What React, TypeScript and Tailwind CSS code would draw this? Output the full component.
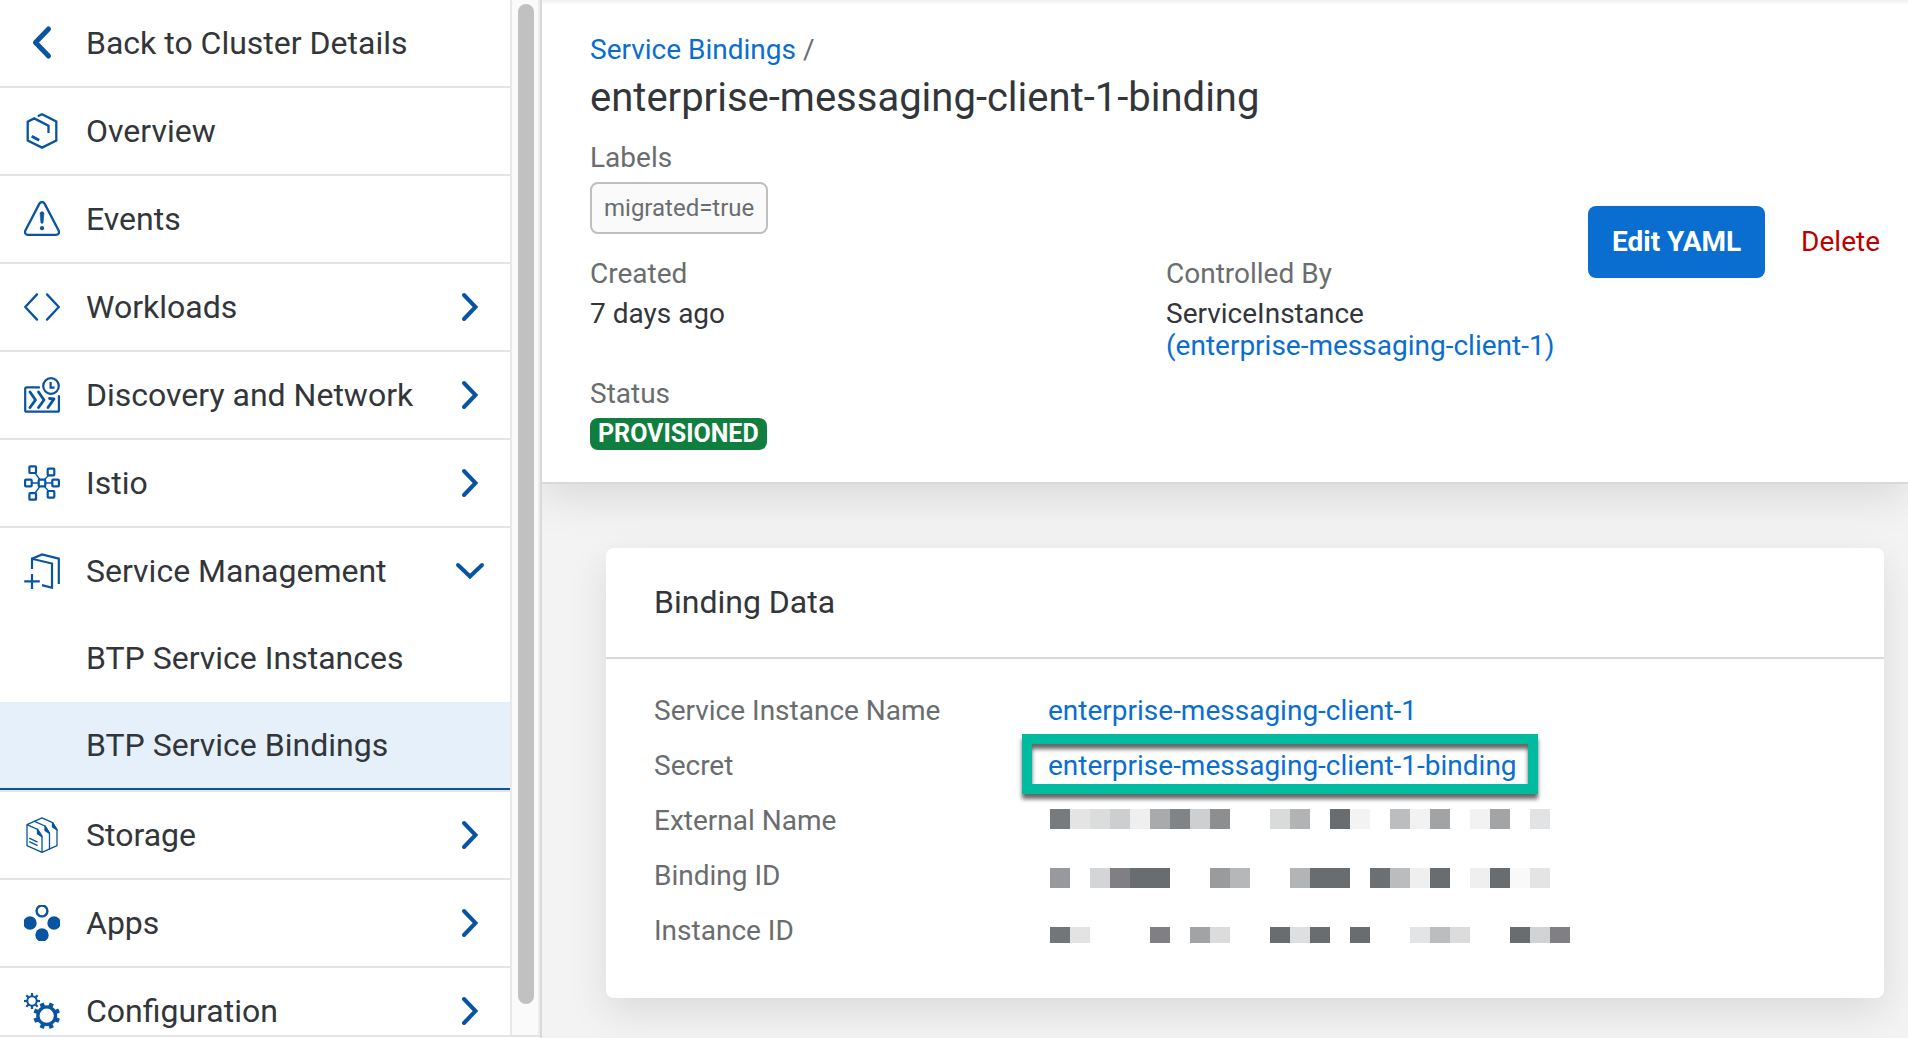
import type { ReactNode } from "react";

function Icon({ children, width = 2.3 }: { children: ReactNode; width?: number }) {
  return (
    <svg
      aria-hidden="true"
      viewBox="0 0 36 36"
      className="size-9 shrink-0"
      fill="none"
      stroke="currentColor"
      strokeWidth={width}
      strokeLinejoin="round"
      strokeLinecap="round"
    >
      {children}
    </svg>
  );
}

const BackIcon = () => (
  <Icon width={5}>
    <path d="M24.5 4 11.5 17.5l13 13.5" />
  </Icon>
);

const OverviewIcon = () => (
  <Icon>
    <g strokeLinecap="butt" strokeLinejoin="miter">
      <path d="M13.8 3.2 18 1.3l14.3 7.2v19L18 34.6 3.7 27.5V8.8l6.5-3.4 14.3 7.3V20" />
      <path strokeWidth="3" d="M7.700 23.200l7.500 4" />
    </g>
  </Icon>
);

const EventsIcon = () => (
  <Icon>
    <path d="M15.400 2.600c1.200-2.100 4-2.100 5.200 0L34.600 29.500c1.100 2.200-.2 4.300-2.600 4.300H4c-2.400 0-3.700-2.100-2.600-4.300Z" />
    <path
      d="M16.100 12.200c0-2 3.800-2 3.800 0l-.8 9.300c-.2 1.300-2 1.300-2.200 0Z"
      fill="currentColor"
      strokeWidth="0.6"
    />
    <circle cx="18" cy="27.200" r="2.100" fill="currentColor" stroke="none" />
  </Icon>
);

const WorkloadsIcon = () => (
  <Icon>
    <path d="M13 5.400 1.200 18 13 30.600M23 5.400 34.800 18 23 30.600" />
  </Icon>
);

const DiscoveryIcon = () => (
  <Icon width={2.2}>
    <path d="M15 10.400H2.500Q1.200 10.400 1.200 11.700V33.200Q1.200 34.700 2.500 34.700H33.500Q34.900 34.700 34.900 33.200V19" />
    <circle cx="27" cy="9" r="7.800" />
    <path d="M26.600 5v5.600h4" strokeLinejoin="miter" strokeLinecap="butt" />
    <path
      d="M6 15l5.500 8L6 30.500M14.500 15l5.500 8-5.500 7.500M25.500 21.500l4.500.5-6 8.500"
      strokeWidth="2.800"
    />
  </Icon>
);

const meshNodes = [
  [8.7, 4.7],
  [27, 7],
  [4.4, 18],
  [18, 18],
  [31.6, 18],
  [8.7, 31.4],
  [27, 29.3],
];

const IstioIcon = () => (
  <Icon width={2.2}>
    <path
      strokeWidth="1.300"
      d="M8 18h6M22 18h6M11 8l4.500 6M24.500 10.500l-4 4M11 28l4.500-6M24.500 26l-4-4.500"
    />
    {meshNodes.map(([x, y]) => (
      <rect key={`${x}-${y}`} x={x - 3.3} y={y - 3.3} width="6.600" height="6.600" rx="0.800" />
    ))}
  </Icon>
);

const ServiceIcon = () => (
  <Icon width={2.2}>
    <g strokeLinecap="butt" strokeLinejoin="miter">
      <path d="M8 16V5.800l20 4.700v24.200l-10-2.600" />
      <path d="M8 5.800l10-4.300 16.800 4.200V31" />
      <path d="M.2 28.300h15.600M8 21v15" />
    </g>
  </Icon>
);

const StorageIcon = () => (
  <Icon width={1.3}>
    <path d="M3 7.600 18 .8l10.500 4.800L33 12.500v16.200L18 35.400 3 28.700V7.600l10.500 4.700L18 19v16.400" />
    <path d="M10.500 4.300 21 9l4.500 7v16" />
    <g fill="currentColor">
      <path d="M13.500 12.300v4.500l4.500 3Z" />
      <path d="M21 9v4.500l4.500 3Z" />
      <path d="M28.500 5.600V10l4.500 3Z" />
    </g>
    <path d="M5.700 21.300l7.500 3.500M5.700 24.800l7.500 3.500" />
  </Icon>
);

const AppsIcon = () => (
  <Icon width={2.4}>
    <circle cx="18" cy="6" r="5.400" />
    <g fill="currentColor" stroke="none">
      <circle cx="6" cy="18" r="6.700" />
      <circle cx="30" cy="18" r="6.700" />
      <circle cx="18" cy="30" r="6.700" />
    </g>
  </Icon>
);

const teeth = [0, 45, 90, 135, 180, 225, 270, 315];

const ConfigurationIcon = () => (
  <Icon>
    <g strokeLinecap="butt">
      <circle cx="8" cy="8" r="4.700" strokeWidth="2" />
      {teeth.map((a) => (
        <path key={a} d="M8 3V0" strokeWidth="2.200" transform={`rotate(${a} 8 8)`} />
      ))}
      <circle cx="22.700" cy="22.700" r="8.800" strokeWidth="3.400" />
      {teeth.map((a) => (
        <path
          key={a}
          d="M22.700 13.700V9.300"
          strokeWidth="4.400"
          transform={`rotate(${a + 22.5} 22.7 22.7)`}
        />
      ))}
    </g>
  </Icon>
);

function Chevron({ open }: { open?: boolean }) {
  return (
    <svg
      aria-hidden="true"
      viewBox="0 0 32 32"
      className="ml-auto size-8 shrink-0"
      fill="none"
      stroke="currentColor"
      strokeWidth="4"
      strokeLinecap="round"
      strokeLinejoin="miter"
    >
      <path d={open ? "M4 10 16 21.500 28 10" : "M10 4 21.500 16 10 28"} />
    </svg>
  );
}

type Entry = { label: string; icon: () => ReactNode; group?: boolean; children?: string[] };

const entries: Entry[] = [
  { label: "Back to Cluster Details", icon: BackIcon },
  { label: "Overview", icon: OverviewIcon },
  { label: "Events", icon: EventsIcon },
  { label: "Workloads", icon: WorkloadsIcon, group: true },
  { label: "Discovery and Network", icon: DiscoveryIcon, group: true },
  { label: "Istio", icon: IstioIcon, group: true },
  {
    label: "Service Management",
    icon: ServiceIcon,
    group: true,
    children: ["BTP Service Instances", "BTP Service Bindings"],
  },
  { label: "Storage", icon: StorageIcon, group: true },
  { label: "Apps", icon: AppsIcon, group: true },
  { label: "Configuration", icon: ConfigurationIcon, group: true },
];

const rowClass = "flex h-[86px] w-full items-center gap-[26px] px-6 text-left text-[#0854a0]";

function NavEntry({ entry }: { entry: Entry }) {
  const Glyph = entry.icon;
  const content = (
    <>
      <Glyph />
      <span className="whitespace-nowrap text-[#32363a]">{entry.label}</span>
    </>
  );
  return (
    <li className="border-b-2 border-[#e4e4e4]">
      {entry.group ? (
        <button type="button" aria-expanded={!!entry.children} className={rowClass}>
          {content}
          <Chevron open={!!entry.children} />
        </button>
      ) : (
        <a href="#" className={rowClass}>
          {content}
        </a>
      )}
      {entry.children && (
        <ul>
          {entry.children.map((child, i) =>
            i === 1 ? (
              <li key={child}>
                <a
                  href="#"
                  aria-current="page"
                  className="flex h-[88px] items-center border-b-2 border-[#0854a0] bg-[#e5f0fa] pl-[86px]"
                >
                  {child}
                </a>
              </li>
            ) : (
              <li key={child}>
                <a href="#" className="flex h-[88px] items-center pl-[86px]">
                  {child}
                </a>
              </li>
            ),
          )}
        </ul>
      )}
    </li>
  );
}

function Sidebar() {
  return (
    <aside className="flex h-full w-[542px] shrink-0 border-r-2 border-[#d9d9d9] bg-white pb-px">
      <div className="flex min-w-0 flex-1 border-b-2 border-[#e4e4e4]">
        <nav className="min-w-0 flex-1 overflow-hidden border-r-2 border-[#e8e8e8] text-[32px] leading-10">
          <ul>
            {entries.map((entry) => (
              <NavEntry key={entry.label} entry={entry} />
            ))}
          </ul>
        </nav>
        <div className="w-7 border-r-2 border-[#ececec] bg-[#fafafa] pt-1 pr-1 pl-1.5">
          <div className="h-[97%] rounded-full bg-[#c1c1c1]" />
        </div>
      </div>
    </aside>
  );
}

function Field({ label, children }: { label: string; children: ReactNode }) {
  return (
    <div>
      <dt className="text-[#6a6d70]">{label}</dt>
      <dd className="mt-2">{children}</dd>
    </div>
  );
}

function PageHeader() {
  return (
    <header className="flex items-center border-b-2 border-[#d9d9d9] bg-[linear-gradient(#f0f0f0,#ffffff_5px)] pt-[34px] pr-2 pb-8 pl-12 text-[28px] leading-8 shadow-[0_14px_40px_rgba(0,0,0,0.1)]">
      <div className="min-w-0 flex-1">
        <nav aria-label="Breadcrumb" className="text-[#6a6d70]">
          <a href="#" className="text-[#0a6ed1]">
            Service Bindings
          </a>{" "}
          /
        </nav>
        <h1 className="mt-2 text-[40px] leading-12">enterprise-messaging-client-1-binding</h1>
        <dl className="mt-5">
          <Field label="Labels">
            <span className="inline-flex h-[52px] items-center rounded-lg border-2 border-[#bfbfbf] bg-[#fafafa] px-3 align-top text-2xl text-[#6a6d70]">
              migrated=true
            </span>
          </Field>
          <div className="mt-6 grid grid-cols-[576fr_422fr]">
            <Field label="Created">7 days ago</Field>
            <Field label="Controlled By">
              <span className="block">ServiceInstance</span>
              <a href="#" className="block whitespace-nowrap text-[#0a6ed1]">
                (enterprise-messaging-client-1)
              </a>
            </Field>
          </div>
          <div className="mt-4">
            <Field label="Status">
              <span className="inline-block rounded-lg bg-[#107e3e] px-2 align-top text-[25px] font-bold text-white">
                PROVISIONED
              </span>
            </Field>
          </div>
        </dl>
      </div>
      <div className="flex gap-4">
        <button
          type="button"
          className="h-[72px] rounded-lg bg-[#0a6ed1] px-6 font-bold whitespace-nowrap text-white"
        >
          Edit YAML
        </button>
        <button type="button" className="h-[72px] px-5 text-[#bb0000]">
          Delete
        </button>
      </div>
    </header>
  );
}

/* Redacted values: one colour per 20px tile, a dash leaves a gap. */
const masks = {
  external:
    "#777b7e #e4e4e4 #dadddc #cdced0 #efefef #a9aaac #808487 #cecfd1 #8d8e90 - - #d9dbdb #b2b3b5 - #6a6d70 #f3f3f3 - #bcbdbf #f2f2f2 #a2a3a5 - #f2f2f2 #a3a4a6 - #e2e3e5",
  binding:
    "#98999d - #d4d5d7 #808084 #6a6d70 #6a6d70 - - #9a9b9c #b6b7b8 - - #b3b4b6 #6a6d70 #6a6d70 - #6c7073 #bbbcbe #efefef #6a6d70 - #efefef #6a6d70 #f9f9f9 #e4e4e4",
  instance:
    "#727679 #e3e3e3 - - - #808084 - #a2a3a5 #dcdcdc - - #6a6d70 #dedfe1 #6a6d70 - #6a6d70 - - #e3e4e6 #bcbdbf #dcdcdc - - #6a6d70 #d2d3d5 #808084",
};

function Mask({ tiles, className }: { tiles: string; className: string }) {
  return (
    <div className="flex pl-0.5">
      {tiles.split(" ").map((color, i) => (
        <span
          key={i}
          className={className}
          style={{ backgroundColor: color === "-" ? "transparent" : color }}
        />
      ))}
    </div>
  );
}

function DataRow({ label, children }: { label: string; children: ReactNode }) {
  return (
    <div className="grid h-[55px] grid-cols-[394px_1fr]">
      <dt className="text-[#6a6d70]">{label}</dt>
      <dd>{children}</dd>
    </div>
  );
}

function BindingData() {
  return (
    <section className="mt-16 mr-6 ml-16 rounded-lg bg-white shadow-[0_14px_40px_rgba(0,0,0,0.1)]">
      <h2 className="border-b-2 border-[#d9d9d9] px-12 py-8 text-[32px] leading-[45px]">
        Binding Data
      </h2>
      <dl className="px-12 pt-6 pb-10 text-[28px] leading-[55px]">
        <DataRow label="Service Instance Name">
          <a href="#" className="text-[#0a6ed1]">
            enterprise-messaging-client-1
          </a>
        </DataRow>
        <DataRow label="Secret">
          <span className="relative inline-block">
            <a href="#" className="text-[#0a6ed1]">
              enterprise-messaging-client-1-binding
            </a>
            <span className="pointer-events-none absolute -top-1 -left-[26px] h-[60px] w-[516px] border-10 border-[#00bb9f] drop-shadow-[0_5px_2px_rgba(0,0,0,0.6)]" />
          </span>
        </DataRow>
        <DataRow label="External Name">
          <Mask tiles={masks.external} className="mt-4 h-5 w-5" />
        </DataRow>
        <DataRow label="Binding ID">
          <Mask tiles={masks.binding} className="mt-5 h-5 w-5" />
        </DataRow>
        <DataRow label="Instance ID">
          <Mask tiles={masks.instance} className="mt-6 h-4 w-5" />
        </DataRow>
      </dl>
    </section>
  );
}

export default function App() {
  return (
    <div className="flex h-screen overflow-hidden bg-[#f3f3f3] font-['Roboto',sans-serif] text-[#32363a]">
      <Sidebar />
      <main className="min-w-0 flex-1 overflow-hidden">
        <PageHeader />
        <BindingData />
      </main>
    </div>
  );
}
